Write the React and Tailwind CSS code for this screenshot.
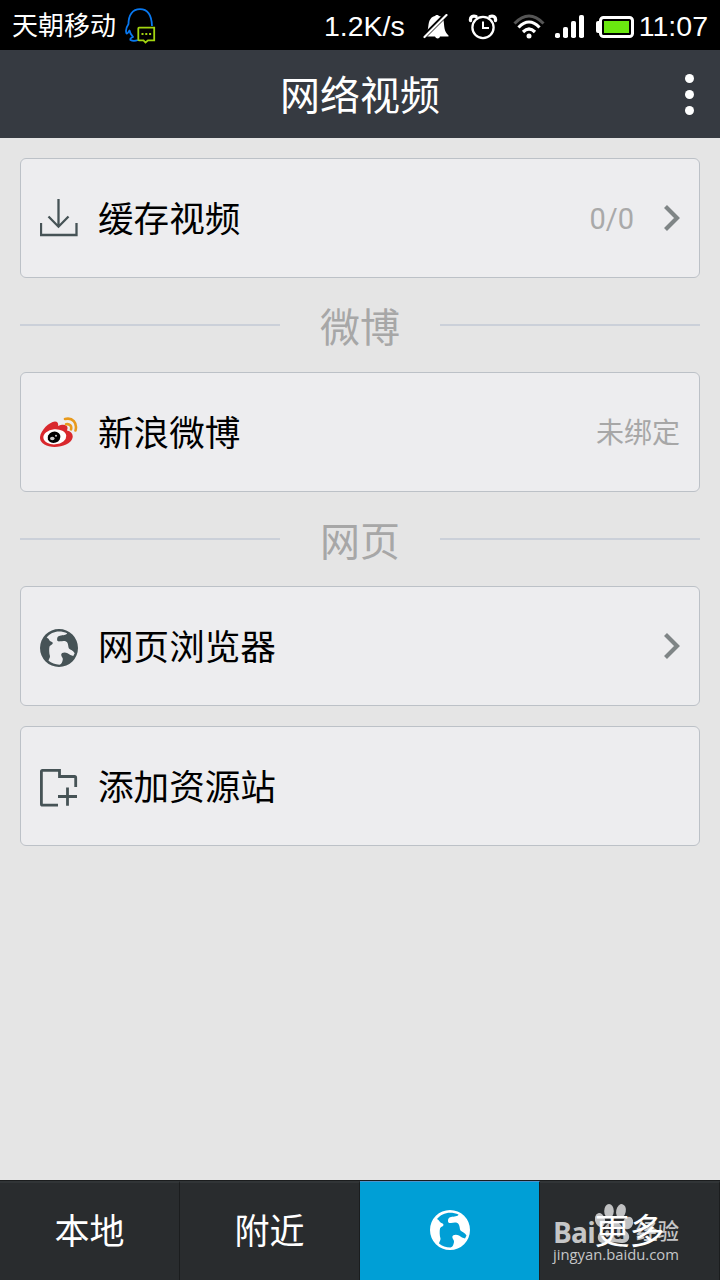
import React from 'react';

const tabs = [
  { id: 'local', label: '本地' },
  { id: 'nearby', label: '附近' },
  { id: 'web' },
  { id: 'more', label: '更多' },
];

const QQIcon = () => (
  <svg className="w-8 h-9" viewBox="0 0 32 36" fill="none">
    <path d="M27 18 C26.6 7 22.5 1.2 15 1.2 C7.500 1.200 3.500 7 3.500 16 C1.500 19 .5 23 1.500 25.500 C2.500 26 3.500 24 4.500 22.500 C5 25.500 6.500 27.500 8 29 C6 29.500 5 31 5.500 32 C7.500 33.200 10.500 33 13 32" stroke="#0878f0" strokeWidth="1.8" strokeLinejoin="round" />
    <path d="M14 19.700 H29.200 V32.300 H23 L20.500 34.500 L18.500 32.300 H14 Q13.300 32.300 13.300 31.500 V20.500 Q13.300 19.700 14 19.700 Z" fill="#000" stroke="#a2d510" strokeWidth="1.8" />
    <path d="M16.500 26 h2 M20.300 26 h2 M24.100 26 h2" stroke="#a2d510" strokeWidth="2" />
  </svg>
)

const MuteIcon = () => (
  <svg className="w-[26px] h-[26px]" viewBox="0 0 26 26">
    <path d="M3.500 20 C6 15 4.500 9 7.500 5 C9 2.800 11 2 12 2 C12.500 .5 15.500 .5 16 2 C18.500 2.500 20 4 20.500 6 C21.500 12 20.500 17 25.500 21.500 V22.500 H17 C16.500 25 13 25 12 22.500 H4 Z" fill="#fff" />
    <path d="M0 23.500 L23 .5" stroke="#000" strokeWidth="4.600" />
    <path d="M2 23.500 L24 1.500" stroke="#fff" strokeWidth="2.200" strokeLinecap="round" transform="translate(-.5 -.5)" />
  </svg>
)

const AlarmIcon = () => (
  <svg className="w-[30px] h-[26px]" viewBox="0 0 30 26" fill="none" stroke="#fff">
    <circle cx="15" cy="13.500" r="10.600" strokeWidth="2.300" />
    <path d="M15 7.500 V14 H21" strokeWidth="2" />
    <path d="M2.500 6.500 C2 3 5 1.200 8 2.500 M27.500 6.500 C28 3 25 1.200 22 2.500" strokeWidth="3.300" strokeLinecap="round" />
  </svg>
)

const WifiIcon = () => (
  <svg className="w-8 h-[26px]" viewBox="0 0 32 26" fill="none">
    <path d="M1.500 9.500 Q16 -5.500 30.500 9.500" stroke="#555" strokeWidth="3" />
    <path d="M5.500 13.500 Q16 2.500 26.500 13.500 M10 18 Q16 12 22 18" stroke="#fff" strokeWidth="3.200" />
    <circle cx="16" cy="22" r="2.500" fill="#fff" />
  </svg>
)

const SignalIcon = () => (
  <svg className="w-[30px] h-[24px]" viewBox="0 0 30 24" fill="#fff">
    <rect x="0" y="18" width="5" height="5" rx="1.800" />
    <rect x="8" y="12" width="5" height="11" rx="1.800" />
    <rect x="16" y="6" width="5" height="17" rx="1.800" />
    <rect x="24" y="0" width="5" height="23" rx="1.800" />
  </svg>
)

const BatteryIcon = () => (
  <svg className="w-[38px] h-[22px]" viewBox="0 0 38 22">
    <rect x="0" y="5" width="6" height="12" rx="2" fill="#fff" />
    <rect x="4.500" y="1.500" width="32" height="19" rx="3" fill="#000" stroke="#fff" strokeWidth="3" />
    <rect x="8" y="5" width="25" height="12" fill="#6ae810" />
  </svg>
)

const DownloadIcon = () => (
  <svg className="w-[38px] h-[38px]" viewBox="0 0 38 38" fill="none" stroke="#465356" strokeWidth="2">
    <path d="M1 24 V36 H36.500 V24" strokeWidth="2.300" />
    <path d="M18.500 0 V28 M8.500 17.500 L18.500 27.700 L28.500 17.500" strokeWidth="2.300" />
  </svg>
)

const WeiboIcon = () => (
  <svg className="w-[38px] h-[38px] mt-[3px]" viewBox="0 0 38 38">
    <path d="M0 22 C1 15 9 7 15 6.500 C18 6.500 18.500 9 18 11 C22 9 27 9 27.500 12.500 C27.700 14 27 15 27 15.500 C31 16.500 33.500 19 32.500 23 C31 28.500 23 32 14.500 32 C6 32 -.5 28 0 22 Z" fill="#d9282d" />
    <ellipse cx="14.800" cy="21.800" rx="11.500" ry="7.600" fill="#fff" transform="rotate(-5 14.800 21.800)" />
    <ellipse cx="14" cy="22.300" rx="6.500" ry="5.600" fill="#000" transform="rotate(-20 14 22.300)" />
    <ellipse cx="12.300" cy="23.500" rx="2.300" ry="1.700" fill="#ccc" />
    <circle cx="16" cy="20.800" r="1" fill="#ccc" />
    <path d="M25 4 C32.500 2 37.500 8 35.500 15.500 M26 9.300 C29.500 8.500 32 11 31 14.300" fill="none" stroke="#e89a1c" strokeWidth="2.600" strokeLinecap="round" />
  </svg>
)

const GlobeIcon = ({ className }) => (
  <svg className={className} viewBox="0 0 40 40">
    <path fill="currentColor" fillRule="evenodd" d="M20 0 A20 20 0 1 0 20 40 A20 20 0 1 0 20 0 Z M7 9 C10 5 15 2.700 20 2.700 C23 2.700 26 3.200 28.500 4.500 C28 6.500 24 6.500 21 7 C18.500 7.500 18 9 18 11 C18 12.800 19 13.200 21 13 C24 12.500 27 12 28.500 14 C30 16 29.500 19 30.500 20.500 C32 22 35 22.500 36.500 25.500 L35 28.500 C33 28 31 27 29 25.500 C26 24.300 22.500 24.800 22.300 27 C22.200 29 24.500 30 24 32 C23.500 34.500 23 37 20.500 37.500 C16 37.500 12 36 9 33.500 C9.200 31.500 10.800 30.500 10.500 28.500 C9.500 25.500 9.500 21 10 18.500 C11 16.500 13.500 16.500 13.500 14.800 C13.300 13 11 13.300 10 12 C9.300 11 8.800 9.800 7 9 Z" />
  </svg>
)

const FolderIcon = () => (
  <svg className="w-[38px] h-[38px] mt-[3px]" viewBox="0 0 38 38" fill="none" stroke="#465356" strokeWidth="2.800">
    <path d="M18 36.200 H2.500 Q1.400 36.200 1.400 35 V2.500 Q1.400 1.400 2.500 1.400 H19.500 V7.500 H34.500 Q35.700 7.500 35.700 8.700 V18 M27.500 18.500 V36.700 M18 27.500 H37" />
  </svg>
)

const Chevron = () => (
  <svg className="w-4 h-[26px]" viewBox="0 0 16 26" fill="none" stroke="#7f8586" strokeWidth="4.200">
    <path d="M1.500 1.500 L13 13 L1.500 24.500" />
  </svg>
)

const Row = ({ icon, title, children }) => (
  <div className="h-[120px] px-[19px] flex items-center rounded-md border border-[#bcc1c7] bg-[#ededef]">
    {icon}
    <span className="ml-5 mt-[5px] flex-1 text-[35.6px] leading-none text-black">{title}</span>
    {children}
  </div>
)

const Divider = ({ title }) => (
  <div className="h-[94px] flex items-center">
    <div className="h-0.5 flex-1 bg-[#cbd0d9]"></div>
    <span className="w-40 mt-2 text-center text-[40px] leading-none text-[#a7a7a7]">{title}</span>
    <div className="h-0.5 flex-1 bg-[#cbd0d9]"></div>
  </div>
)

const Watermark = () => (
  <div className="absolute left-[13px] top-5 w-[130px] text-[#c5c6c7]">
    <svg className="absolute left-[42px] top-0 w-[38px] h-[44px]" viewBox="0 0 38 44" fill="#c0c1c2">
      <ellipse cx="5" cy="17" rx="5" ry="7" transform="rotate(-15 5 17)" />
      <ellipse cx="14" cy="8" rx="4.800" ry="7" />
      <ellipse cx="26" cy="8" rx="4.800" ry="7" transform="rotate(12 26 8)" />
      <ellipse cx="33" cy="20" rx="5" ry="6.500" transform="rotate(20 33 20)" />
      <path d="M19 18 C25 18 27 25 32 29 C37 34 33 41 26 40 C21 39 17 39 12 40 C4 42 0 35 5 29 C10 25 12 18 19 18 Z" />
    </svg>
    <div className="relative pt-[15px] h-[43px] flex items-center font-bold">
      <span className="w-[41px] text-[28px] leading-none tracking-tight font-['Open_Sans',sans-serif]">Bai</span>
      <span className="w-[38px] text-xl leading-none text-center text-[#292c2e]">du</span>
      <span className="ml-1 text-[21.5px] leading-none font-medium">经验</span>
    </div>
    <div className="text-[14.800px] leading-[17px] font-['Open_Sans',sans-serif]">jingyan.baidu.com</div>
  </div>
)

const App = () => {
  return (
    <div className="w-[720px] h-[1280px] flex flex-col overflow-hidden bg-[#e5e5e5] font-['Roboto','Noto_Sans_CJK_SC',sans-serif]">
      <div className="h-[50px] pl-3 pr-3 flex items-center justify-between bg-black text-white">
        <div className="flex items-center">
          <span className="mt-0.5 text-[26px] leading-none">天朝移动</span>
          <div className="ml-[9px] mt-0.5"><QQIcon /></div>
        </div>
        <div className="mt-[3px] flex items-center font-['Liberation_Sans',sans-serif]">
          <span className="mr-[18px] text-[28.500px] leading-none">1.2K/s</span>
          <MuteIcon />
          <div className="ml-[19px] flex"><AlarmIcon /></div>
          <div className="ml-[15px] flex"><WifiIcon /></div>
          <div className="ml-[10px] flex"><SignalIcon /></div>
          <div className="ml-[11px] flex"><BatteryIcon /></div>
          <span className="ml-[5px] text-[28.500px] leading-none">11:07</span>
        </div>
      </div>

      <div className="h-[88px] px-6 grid grid-cols-3 items-center bg-[#363a41] text-white">
        <h1 className="col-start-2 mt-1.5 text-center text-[40px] leading-none">网络视频</h1>
        <div className="flex flex-col items-end gap-[7px] pr-0.5">
          <span className="w-[9px] h-[9px] rounded-full bg-white"></span>
          <span className="w-[9px] h-[9px] rounded-full bg-white"></span>
          <span className="w-[9px] h-[9px] rounded-full bg-white"></span>
        </div>
      </div>

      <div className="flex-1 px-5 pt-5">
        <Row icon={<DownloadIcon />} title="缓存视频">
          <span className="mr-[30px] mt-[3px] text-[29px] text-[#a9a9a9]">0/0</span>
          <Chevron />
        </Row>
        <Divider title="微博" />
        <Row icon={<WeiboIcon />} title="新浪微博">
          <span className="mt-1 text-[28px] leading-none text-[#a7a7a7]">未绑定</span>
        </Row>
        <Divider title="网页" />
        <Row icon={<GlobeIcon className="w-[38px] h-[38px] mt-[3px] text-[#465356]" />} title="网页浏览器">
          <Chevron />
        </Row>
        <div className="mt-5">
          <Row icon={<FolderIcon />} title="添加资源站" />
        </div>
      </div>

      <div className="h-[100px] grid grid-cols-4 border-t border-[#1b1d1e] bg-[#292c2e] text-white">
        {tabs.map((tab) => (
          <div
            key={tab.id}
            className={
              tab.id === 'web'
                ? 'flex items-center justify-center border-t border-r border-[#4a94d0] border-r-[#1b1d1e] bg-[#009fd6]'
                : 'relative flex items-center justify-center border-t-2 border-r border-[#313537] border-r-[#1b1d1e]'
            }
          >
            {tab.id === 'more' && <Watermark />}
            {tab.label
              ? <span className="relative mt-0.5 text-[35px] leading-none">{tab.label}</span>
              : <GlobeIcon className="w-10 h-10 mb-[3px] text-white" />}
          </div>
        ))}
      </div>
    </div>
  )
}

export default App;
